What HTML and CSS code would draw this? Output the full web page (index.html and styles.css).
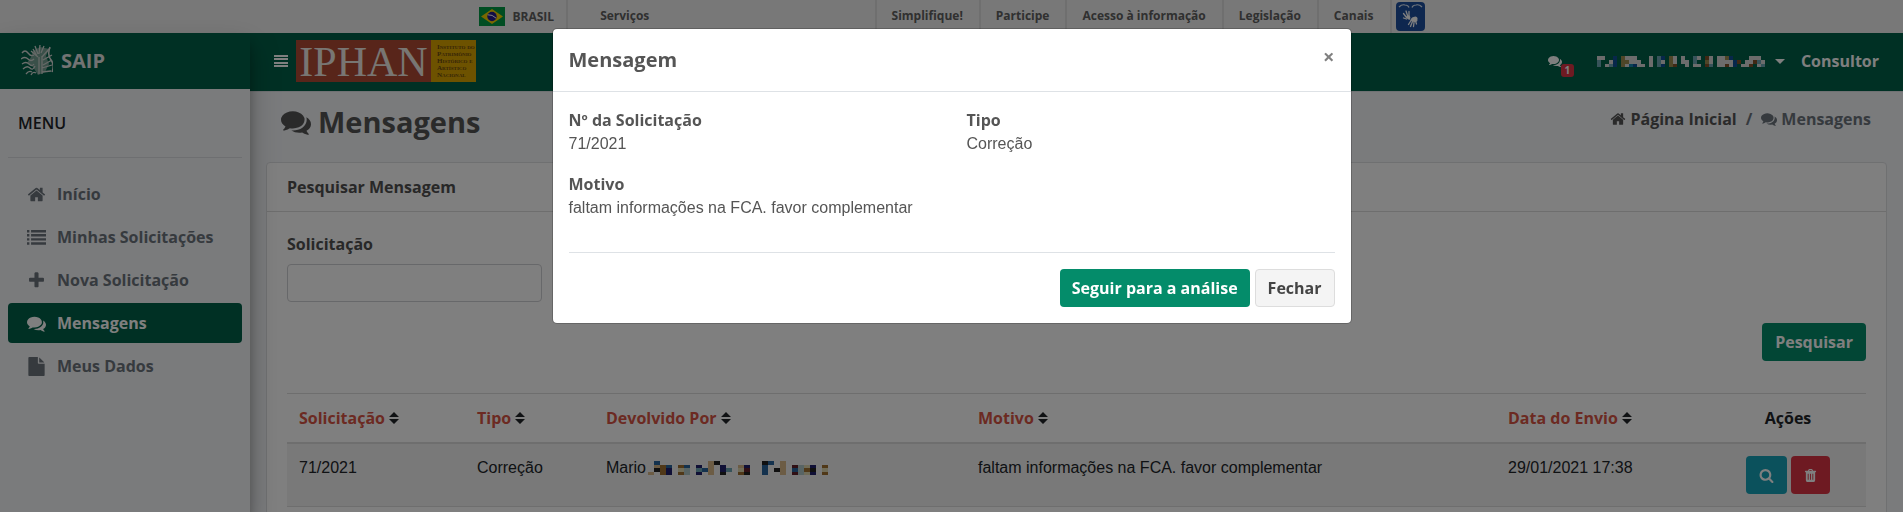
FILE: index.html
```html
<!DOCTYPE html>
<html lang="pt-BR">
<head>
<meta charset="utf-8">
<meta name="viewport" content="width=device-width, initial-scale=1">
<title>SAIP - Mensagens</title>
<link rel="stylesheet" href="styles.css">
</head>
<body>
<svg class="sprite" aria-hidden="true">
  <symbol id="i-comments" viewBox="0 0 1792 1792"><path d="M1408 768q0 139-94 257t-256.500 186.500-353.500 68.500q-86 0-176-16-124 88-278 128-36 9-86 16h-3q-11 0-20.500-8t-11.500-21q-1-3-1-6.500t.5-6.500 2-6l2.500-5 3.500-5.500 4-5 4.500-5 4-4.500q5-6 23-25t26-29.500 22.500-29 25-38.500 20.500-44q-124-72-195-177t-71-224q0-139 94-257t256.500-186.500 353.500-68.500 353.500 68.500 256.500 186.500 94 257zm384 256q0 120-71 224.500t-195 176.500q10 24 20.500 44t25 38.500 22.500 29 26 29.500 23 25q1 1 4 4.500t4.500 5 4 5 3.500 5.500l2.500 5 2 6 .5 6.500-1 6.500q-3 14-13 22t-22 7q-50-7-86-16-154-40-278-128-90 16-176 16-271 0-472-132 58 4 88 4 161 0 309-45t264-129q125-92 192-212t67-254q0-77-23-152 129 71 204 178t75 230z"/></symbol>
  <symbol id="i-home" viewBox="0 0 1792 1792"><path d="M1472 992v480q0 26-19 45t-45 19h-384v-384h-256v384h-384q-26 0-45-19t-19-45v-480q0-1 .5-3t.5-3l575-474 575 474q1 2 1 6zm223-69l-62 74q-8 9-21 11h-3q-13 0-21-7l-692-577-692 577q-12 8-24 7-13-2-21-11l-62-74q-8-10-7-23.500t11-21.500l719-599q32-26 76-26t76 26l244 204v-195q0-14 9-23t23-9h192q14 0 23 9t9 23v408l219 182q10 8 11 21.500t-7 23.500z"/></symbol>
  <symbol id="i-list" viewBox="0 0 1792 1792"><path d="M0 192h224v224H0zM384 192h1408v224H384zM0 576h224v224H0zM384 576h1408v224H384zM0 960h224v224H0zM384 960h1408v224H384zM0 1344h224v224H0zM384 1344h1408v224H384z"/></symbol>
  <symbol id="i-plus" viewBox="0 0 1792 1792"><path d="M1600 736v192q0 40-28 68t-68 28h-416v416q0 40-28 68t-68 28h-192q-40 0-68-28t-28-68v-416h-416q-40 0-68-28t-28-68v-192q0-40 28-68t68-28h416v-416q0-40 28-68t68-28h192q40 0 68 28t28 68v416h416q40 0 68 28t28 68z"/></symbol>
  <symbol id="i-file" viewBox="0 0 1792 1792"><path d="M1152 512v-472q22 14 36 28l408 408q14 14 28 36h-472zm-128 32q0 40 28 68t68 28h544v1056q0 40-28 68t-68 28h-1344q-40 0-68-28t-28-68v-1600q0-40 28-68t68-28h800v544z"/></symbol>
  <symbol id="i-search" viewBox="0 0 1792 1792"><path d="M1216 832q0-185-131.500-316.500t-316.500-131.500-316.500 131.500-131.500 316.500 131.500 316.500 316.500 131.500 316.500-131.500 131.500-316.500zm512 832q0 52-38 90t-90 38q-54 0-90-38l-343-342q-179 124-399 124-143 0-273.500-55.500t-225-150-150-225-55.500-273.500 55.500-273.500 150-225 225-150 273.500-55.500 273.500 55.500 225 150 150 225 55.500 273.500q0 220-124 399l343 343q37 37 37 90z"/></symbol>
  <symbol id="i-trash" viewBox="0 0 14 16"><path fill-rule="evenodd" d="M4.200 3 4.900 1.500Q5.100 1 5.700 1h2.600q.6 0 .8.500L9.800 3h2.700q.5 0 .5.500v.5q0 .5-.5.500H12v8.600q0 1.900-1.400 1.900H3.400Q2 15 2 13.100V4.500h-.5Q1 4.500 1 4v-.5q0-.5.5-.5zM5.500 3h3L8 2H6zM4 6v6.500h1V6zm2.500 0v6.500h1V6zM9 6v6.500h1V6z"/></symbol>
  <symbol id="i-bars" viewBox="0 0 14 14"><path d="M0 1h14v2H0zM0 4h14v2H0zM0 8h14v2H0zM0 11h14v2H0z"/></symbol>
  <symbol id="i-sort" viewBox="0 0 10 14"><path d="M5 1l5 5H0zM0 8h10l-5 5z"/></symbol>
</svg>

<div class="page">
  <div class="govbar">
    <div class="govbar-inner">
      <a class="gov-brand" href="#">
        <svg class="flag" viewBox="0 0 26 19" aria-hidden="true"><path fill="#009a44" d="M0 0h26v19H0z"/><path fill="#f4d000" d="M13 2l11 7.500L13 17 2 9.500z"/><circle cx="13" cy="9.500" r="4.700" fill="#251a8c"/><path d="M8.800 7.800q4.500-.4 8.200 3.300" fill="none" stroke="#fff"/></svg>
        BRASIL</a>
      <a class="gov-services" href="#">Serviços</a>
      <nav class="gov-links" aria-label="Portal Brasil">
        <a href="#">Simplifique!</a><a href="#">Participe</a><a href="#">Acesso à informação</a><a href="#">Legislação</a><a href="#">Canais</a>
      </nav>
      <a class="vlibras" href="#" aria-label="VLibras">
        <svg viewBox="0 0 29 29" aria-hidden="true"><rect width="29" height="29" rx="4" fill="#1d4f9e"/><path d="M3 5q3-3 6-2 3 0 4 2.500M26 5q-3-3-6-2-3 0-4 2.500" fill="none" stroke="#dfe8f5" stroke-width="1.200"/><g fill="none" stroke="#fff" stroke-width="1.300" stroke-linecap="round"><path d="M7.500 11.500l3 4M10 9l2 6M13 9.500v5M7.500 16l3 1"/><path d="M12.500 22.500l2.500-4M14.500 24.500l2-5M17.500 24.500l.5-4M20.500 22l-1-3"/></g><path fill="#fff" d="M10 14.500q2-1.500 3.500-1 1.500 1.500.5 4-2.500 1-4-3zM14.500 18.500q0-2.500 3-3.500 3-1.500 4 1 .5 3-1.500 4-3 .5-5.500-1.500z"/></svg>
      </a>
    </div>
  </div>

  <div class="shell">
    <aside class="sidebar">
      <a class="brand" href="#">
        <svg class="brand-mark" viewBox="0 0 32 32" aria-hidden="true"><g fill="none" stroke="#d8ddda"><path d="M1 8q3-4 6 0t6 2M0 14q4-3 7 0t6 0M1 19q4-3 7 0t5 0M2 24q4-4 7-1t5-2M5 29q3-4 6-2M10 30q2-4 5-2M12 4l4 7M14 1l3 8M19 0l-1 9M23 1l-3 7M10 6l7 6M29 3l-8 9M31 10l-9 5M31 15l-9 5M31 20l-10 3M30 26l-9 1M18 12v17M21 11v18" stroke-width="1.300"/><path d="M29 2q-3 8 1 13t1 12" stroke-width="1.600"/></g><path fill="#c3cbc7" opacity=".6" d="M12 6l7-4 9 2-3 7 3 8-4 8-7 3-5-8-6-4 4-6z"/></svg>
        <span>SAIP</span>
      </a>
      <h2 class="menu-title">MENU</h2>
      <nav class="menu" aria-label="Menu">
        <a href="#"><svg><use href="#i-home"/></svg>Início</a>
        <a href="#"><svg><use href="#i-list"/></svg>Minhas Solicitações</a>
        <a href="#"><svg><use href="#i-plus"/></svg>Nova Solicitação</a>
        <a href="#" class="active" aria-current="page"><svg><use href="#i-comments"/></svg>Mensagens</a>
        <a href="#"><svg><use href="#i-file"/></svg>Meus Dados</a>
      </nav>
    </aside>

    <div class="main">
      <header class="navbar">
        <button class="toggle" type="button" aria-label="Alternar menu"><svg><use href="#i-bars"/></svg></button>
        <a class="iphan" href="#">
          <span class="iphan-name">IPHAN</span>
          <span class="iphan-full"><span>Instituto do</span><span>Patrimônio</span><span>Histórico e</span><span>Artístico</span><span>Nacional</span></span>
        </a>
        <a class="alerts" href="#" aria-label="Mensagens não lidas"><svg><use href="#i-comments"/></svg><span class="badge">1</span></a>
        <button class="user" type="button" aria-label="Usuário"><svg class="mosaic" data-mosaic="user" viewBox="0 0 168 11"></svg><span class="caret"></span></button>
        <span class="role">Consultor</span>
      </header>

      <main>
        <div class="page-head">
          <h1><svg><use href="#i-comments"/></svg>Mensagens</h1>
          <nav class="crumbs" aria-label="Trilha">
            <a href="#"><svg><use href="#i-home"/></svg>Página Inicial</a><span>/</span><span class="here"><svg><use href="#i-comments"/></svg>Mensagens</span>
          </nav>
        </div>

        <section class="card">
          <h2 class="card-head">Pesquisar Mensagem</h2>
          <div class="card-body">
            <form>
              <div class="fields">
                <div class="field"><label for="solicitacao">Solicitação</label><input id="solicitacao" type="text"></div>
                <div class="field"><label for="tipo">Tipo</label><select id="tipo"><option></option></select></div>
              </div>
              <div class="form-actions"><button class="btn btn-green" type="button">Pesquisar</button></div>
            </form>
            <table class="grid">
              <colgroup><col class="c-sol"><col class="c-tipo"><col class="c-dev"><col><col class="c-data"><col class="c-acoes"></colgroup>
              <thead><tr>
                <th><a href="#">Solicitação<svg><use href="#i-sort"/></svg></a></th>
                <th><a href="#">Tipo<svg><use href="#i-sort"/></svg></a></th>
                <th><a href="#">Devolvido Por<svg><use href="#i-sort"/></svg></a></th>
                <th><a href="#">Motivo<svg><use href="#i-sort"/></svg></a></th>
                <th><a href="#">Data do Envio<svg><use href="#i-sort"/></svg></a></th>
                <th class="center">Ações</th>
              </tr></thead>
              <tbody><tr>
                <td>71/2021</td><td>Correção</td>
                <td>Mario <svg class="mosaic-row" data-mosaic="sender" viewBox="0 0 186 14"></svg></td>
                <td>faltam informações na FCA. favor complementar</td>
                <td>29/01/2021 17:38</td>
                <td><div class="row-actions">
                  <button class="btn btn-view" type="button" aria-label="Visualizar"><svg><use href="#i-search"/></svg></button>
                  <button class="btn btn-del" type="button" aria-label="Excluir"><svg><use href="#i-trash"/></svg></button>
                </div></td>
              </tr></tbody>
            </table>
          </div>
        </section>
      </main>
    </div>
  </div>
</div>

<div class="backdrop">
  <div class="modal" role="dialog" aria-modal="true" aria-labelledby="modal-title">
    <div class="modal-head">
      <h2 id="modal-title">Mensagem</h2>
      <button class="close" type="button" aria-label="Fechar janela">×</button>
    </div>
    <dl class="modal-body">
      <div><dt>Nº da Solicitação</dt><dd>71/2021</dd></div>
      <div><dt>Tipo</dt><dd>Correção</dd></div>
      <div class="wide"><dt>Motivo</dt><dd>faltam informações na FCA. favor complementar</dd></div>
    </dl>
    <div class="modal-foot">
      <button class="btn btn-green btn-strong" type="button">Seguir para a análise</button>
      <button class="btn btn-light" type="button">Fechar</button>
    </div>
  </div>
</div>
<script src="mosaic.js"></script>
</body>
</html>
```
FILE: styles.css
```css
* { box-sizing: border-box; }

html { background: #fff; }

body {
  margin: 0;
  height: 100vh;
  overflow: hidden;
  color: #212529;
  font: 16px/24px "Liberation Sans", Arial, sans-serif;
}

h1, h2, dl, dd { margin: 0; }

a { color: inherit; text-decoration: none; }

button { font: inherit; cursor: pointer; }

svg { fill: currentColor; flex: none; }

.sprite { display: none; }

.page {
  height: 100vh;
  overflow: hidden;
  margin-right: 1px;
  display: flex;
  flex-direction: column;
  background: #f4f6f9;
  font-family: "Open Sans", sans-serif;
  font-weight: 700;
}

/* Government bar */
.govbar { background: #f1f1f1; color: #606060; font-size: 12px; }

.govbar-inner {
  display: flex;
  align-items: stretch;
  max-width: 946px;
  height: 33px;
  margin: 0 auto;
  line-height: 32px;
}

.gov-brand {
  display: flex;
  align-items: center;
  gap: 8px;
  padding-right: 12px;
  border-right: 2px solid #dfdfdf;
}

.flag { width: 26px; height: 19px; }

.gov-services { padding-left: 32px; }

.gov-links { display: flex; margin-left: auto; }

.gov-links a { padding: 0 16px 0 15px; border-left: 2px solid #dfdfdf; }

.vlibras { padding: 2px 0 0 4px; border-left: 2px solid #dfdfdf; }

.vlibras svg { display: block; width: 29px; height: 29px; }

/* Shell */
.shell { display: flex; flex: 1; min-height: 0; }

.sidebar {
  position: relative;
  z-index: 2;
  width: 250px;
  flex: none;
  background: #f4f6f9;
  box-shadow: 0 14px 28px rgba(0, 0, 0, .25), 0 10px 10px rgba(0, 0, 0, .22);
}

.brand {
  display: flex;
  align-items: center;
  gap: 8px;
  height: 56px;
  padding-left: 21px;
  background: #006048;
  color: #e6e6e6;
  font-size: 20px;
}

.brand-mark { width: 32px; height: 32px; }

.menu-title {
  margin: 0 8px;
  padding: 22px 10px;
  border-bottom: 1px solid #dcdee2;
  font-size: 16px;
  font-weight: 600;
}

.menu {
  display: flex;
  flex-direction: column;
  gap: 3px;
  padding: 16px 8px;
}

.menu a {
  display: flex;
  align-items: center;
  gap: 11px;
  height: 40px;
  padding-left: 19px;
  border-radius: 4px;
  color: #6c757d;
}

.menu svg { width: 19px; height: 19px; }

.menu .active { background: #006048; color: #fff; }

.main { flex: 1; min-width: 0; }

.navbar {
  display: flex;
  align-items: center;
  height: 59px;
  padding: 0 24px 2px;
  background: #006048;
  border-bottom: 1px solid #dee2e6;
  color: #fff;
}

.toggle { display: flex; padding: 0; border: 0; background: none; color: #fff; }

.toggle svg { width: 14px; height: 14px; }

.iphan { display: flex; height: 42px; margin-left: 8px; }

.iphan-name {
  width: 135px;
  background: #b14a34;
  color: #f1ece6;
  font: 42px/44px "Liberation Serif", serif;
  text-align: center;
}

.iphan-full {
  display: flex;
  flex-direction: column;
  justify-content: center;
  width: 45px;
  padding-left: 6px;
  background: #dba400;
  color: #6b4a10;
  font: small-caps 700 7px/7px "Liberation Serif", serif;
  white-space: nowrap;
}

.alerts { position: relative; margin-left: auto; display: flex; }

.alerts svg { width: 14px; height: 14px; }

.badge {
  position: absolute;
  left: 13px;
  top: 10px;
  width: 13px;
  border-radius: 3px;
  background: #dc3545;
  font-size: 10px;
  line-height: 13px;
  text-align: center;
}

.user {
  display: flex;
  align-items: center;
  gap: 10px;
  margin: 0 16px 0 35px;
  padding: 0;
  border: 0;
  background: none;
  color: #fff;
}

.mosaic { width: 168px; height: 11px; }

.caret { border: 5px solid transparent; border-top-color: currentColor; border-bottom: 0; }

/* Page heading */
.page-head {
  display: flex;
  justify-content: space-between;
  align-items: flex-start;
  padding: 12px 32px 22px 31px;
}

.page-head h1 {
  display: flex;
  align-items: center;
  gap: 7px;
  color: #555;
  font-size: 29px;
  line-height: 36px;
}

.page-head h1 svg { width: 30px; height: 30px; }

.crumbs { display: flex; gap: 9px; padding-top: 3px; color: #6c757d; }

.crumbs a { color: #555; }

.crumbs a, .here { display: flex; align-items: center; gap: 4px; }

.crumbs svg { width: 16px; height: 16px; }

/* Card */
.card {
  margin: 0 16px 16px;
  border: 1px solid #dee0e3;
  border-radius: 4px;
  background: #fff;
  color: #505050;
}

.card-head {
  padding: 12px 20px;
  border-bottom: 1px solid #dcdcdc;
  font-size: 16px;
}

.card-body { padding: 20px; }

.fields { display: flex; gap: 11px; }

.field { display: flex; flex-direction: column; gap: 8px; width: 255px; }

.field input, .field select {
  height: 38px;
  padding: 6px 12px;
  border: 1px solid #ced0d4;
  border-radius: 4px;
  background: #fff;
  font: inherit;
}

.form-actions { display: flex; justify-content: flex-end; padding: 21px 0 32px; }

.btn {
  display: flex;
  align-items: center;
  justify-content: center;
  height: 38px;
  padding: 0 13px;
  border: 0;
  border-radius: 4px;
  color: #fff;
  font-family: "Open Sans", sans-serif;
  font-weight: 700;
}

.btn-green { background: #048c6a; }

.btn-strong { padding: 0 12px; }

.btn-light {
  padding: 0 12px;
  border: 1px solid #ddd;
  background: #f4f4f4;
  color: #444;
}

.btn-view { background: #17a2b8; }

.btn-del { background: #dc3545; }

.btn svg { width: 15px; height: 15px; }

.btn-del svg { width: 13px; }

/* Results */
.grid { width: 100%; border-collapse: collapse; table-layout: fixed; color: #212529; }

.c-sol { width: 178px; }
.c-tipo { width: 129px; }
.c-dev { width: 372px; }
.c-data { width: 214px; }
.c-acoes { width: 156px; }

.grid th {
  padding: 12px;
  border-top: 1px solid #dcdcdc;
  border-bottom: 2px solid #dcdcdc;
  text-align: left;
}

.grid th a { display: flex; align-items: center; gap: 4px; color: #d85444; }

.grid th svg { width: 10px; height: 14px; color: #212529; }

.grid .center { text-align: center; }

.grid td {
  padding: 12px;
  border-bottom: 1px solid #dcdcdc;
  background: #f2f2f2;
  font-family: "Liberation Sans", Arial, sans-serif;
  font-weight: 400;
  vertical-align: top;
}

.mosaic-row { width: 186px; height: 14px; margin-left: -2px; vertical-align: -2px; }

.row-actions { display: flex; justify-content: center; gap: 4px; }

/* Modal */
.backdrop {
  position: fixed;
  inset: 0 1px 0 0;
  z-index: 10;
  padding: 28px 16px;
  background: rgba(0, 0, 0, .5);
}

.modal {
  max-width: 800px;
  margin: 0 auto;
  border: 1px solid rgba(0, 0, 0, .2);
  border-radius: 5px;
  background: #fff;
  background-clip: padding-box;
  color: #555;
}

.modal-head {
  display: flex;
  justify-content: space-between;
  align-items: flex-start;
  padding: 16px;
  border-bottom: 1px solid #dee2e6;
}

.modal-head h2 { font: 700 20px/30px "Open Sans", sans-serif; }

.close {
  padding: 0;
  border: 0;
  background: none;
  color: #808080;
  font: 700 20px/24px "Open Sans", sans-serif;
}

.modal-body {
  display: grid;
  grid-template-columns: 1fr 1fr;
  gap: 16px 30px;
  padding: 16px 16px 32px;
}

.modal-body .wide { grid-column: 1 / -1; }

.modal-body dt { font-family: "Open Sans", sans-serif; font-weight: 700; }

.modal-foot {
  display: flex;
  justify-content: flex-end;
  gap: 5px;
  margin: 0 16px;
  padding: 16px 0;
  border-top: 1px solid #dee2e6;
}
```
FILE: mosaic.js
```js
// Obscured names: each string is one row of cells, each letter a palette colour.
const palette = {
  w: '#d8d8d8', t: '#6fa6b4', b: '#0f4f96', o: '#9c8c50', r: '#805028',
  k: '#202020', n: '#20206c', s: '#28649c', d: '#602028', e: '#d8b888',
  g: '#b0c8c8', c: '#1684b0', y: '#e0d8b0', a: '#a07030'
};

const mosaics = {
  user: {
    cell: 4, heights: [4, 4, 3],
    rows: [
      'ww..b.owww...w.tb.ow.w..tw.rw.wwob....www.',
      't..wb.oowww..w.tw.ow.ww.t..ow.wwwwbr.wwrtw',
      't.wtb.owcbww.w.tb.or..w.ww.rt.wwrwb.wwr.wt'
    ]
  },
  sender: {
    cell: 6, heights: [4, 3, 4, 3],
    rows: [
      '.s........ek.......ks.e........',
      '.eas.as.n.e.n..en..s..e.dgyn.a.',
      '.kan.yg.tse.nt.yd..s.ke.sgak.y.',
      'e.an.ag.n.e.k..ak..s..e.dgyn.a.'
    ]
  }
};

document.querySelectorAll('[data-mosaic]').forEach(svg => {
  const { cell, heights, rows } = mosaics[svg.dataset.mosaic];
  let y = 0;
  rows.forEach((row, i) => {
    [...row].forEach((key, x) => {
      if (!palette[key]) return;
      const r = document.createElementNS('http://www.w3.org/2000/svg', 'rect');
      r.setAttribute('x', x * cell);
      r.setAttribute('y', y);
      r.setAttribute('width', cell);
      r.setAttribute('height', heights[i]);
      r.setAttribute('fill', palette[key]);
      svg.append(r);
    });
    y += heights[i];
  });
});
```
